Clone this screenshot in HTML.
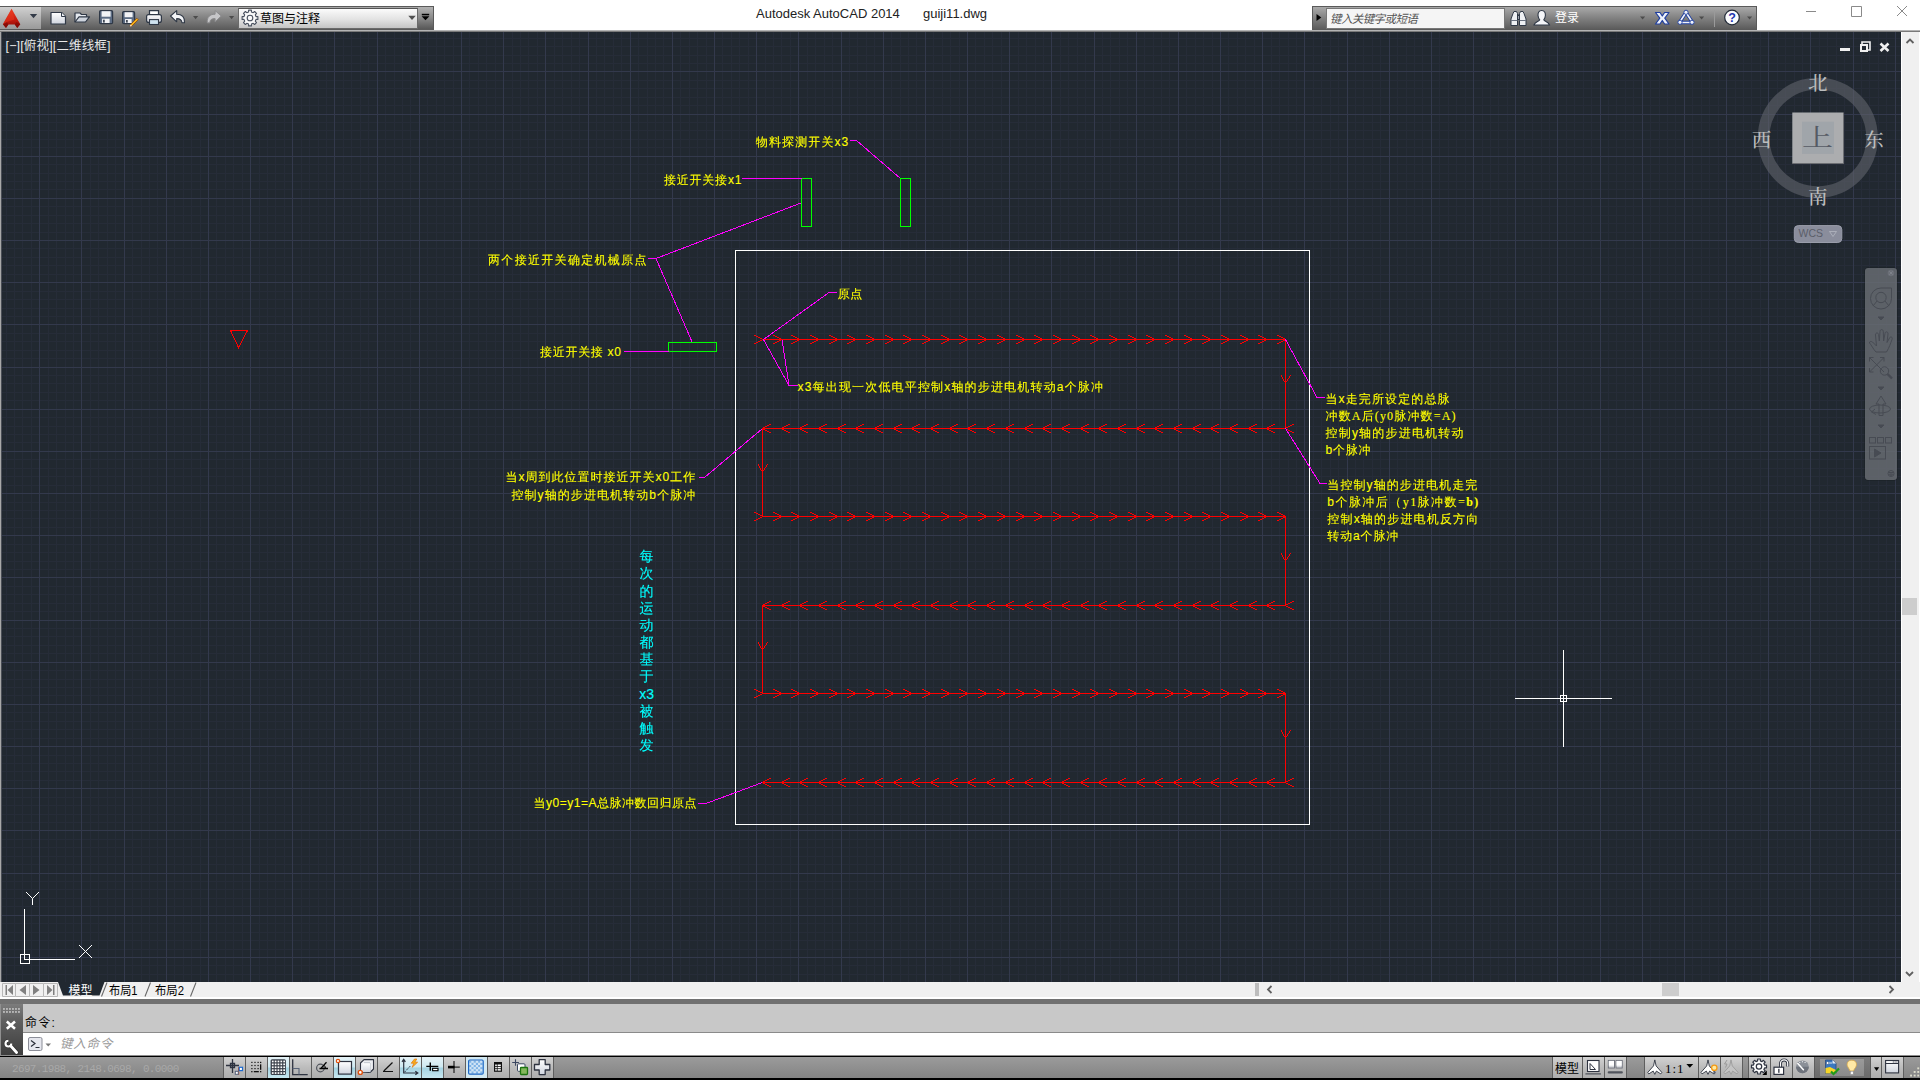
<!DOCTYPE html>
<html lang="zh-CN"><head><meta charset="utf-8"><title>Autodesk AutoCAD 2014 guiji11.dwg</title>
<style>
html,body{margin:0;padding:0}
body{width:1920px;height:1080px;overflow:hidden;background:#fff;position:relative;font-family:"Liberation Sans","Noto Sans CJK SC",sans-serif;font-size:12px}
.abs{position:absolute}
#draw{position:absolute;left:0;top:0}
</style></head><body>

<div class="abs" style="left:0;top:32px;width:2px;height:950px;background:#a8a8a8"></div>
<div class="abs" style="left:1px;top:32px;width:1px;height:950px;background:#4a4e56"></div>
<div class="abs" style="left:2px;top:32px;width:1899px;height:950px;background:#212830"></div>
<svg id="draw" width="1920" height="1080" viewBox="0 0 1920 1080">
<path d="M6.5 32V982M14.5 32V982M22.5 32V982M31.5 32V982M48.5 32V982M56.5 32V982M65.5 32V982M73.5 32V982M90.5 32V982M98.5 32V982M107.5 32V982M115.5 32V982M132.5 32V982M141.5 32V982M149.5 32V982M157.5 32V982M174.5 32V982M183.5 32V982M191.5 32V982M200.5 32V982M216.5 32V982M225.5 32V982M233.5 32V982M242.5 32V982M259.5 32V982M267.5 32V982M275.5 32V982M284.5 32V982M301.5 32V982M309.5 32V982M318.5 32V982M326.5 32V982M343.5 32V982M351.5 32V982M360.5 32V982M368.5 32V982M385.5 32V982M394.5 32V982M402.5 32V982M410.5 32V982M427.5 32V982M436.5 32V982M444.5 32V982M453.5 32V982M469.5 32V982M478.5 32V982M486.5 32V982M495.5 32V982M512.5 32V982M520.5 32V982M528.5 32V982M537.5 32V982M554.5 32V982M562.5 32V982M571.5 32V982M579.5 32V982M596.5 32V982M604.5 32V982M613.5 32V982M621.5 32V982M638.5 32V982M647.5 32V982M655.5 32V982M663.5 32V982M680.5 32V982M689.5 32V982M697.5 32V982M706.5 32V982M722.5 32V982M731.5 32V982M739.5 32V982M748.5 32V982M765.5 32V982M773.5 32V982M781.5 32V982M790.5 32V982M807.5 32V982M815.5 32V982M824.5 32V982M832.5 32V982M849.5 32V982M857.5 32V982M866.5 32V982M874.5 32V982M891.5 32V982M900.5 32V982M908.5 32V982M916.5 32V982M933.5 32V982M942.5 32V982M950.5 32V982M959.5 32V982M975.5 32V982M984.5 32V982M992.5 32V982M1001.5 32V982M1018.5 32V982M1026.5 32V982M1035.5 32V982M1043.5 32V982M1060.5 32V982M1068.5 32V982M1077.5 32V982M1085.5 32V982M1102.5 32V982M1110.5 32V982M1119.5 32V982M1127.5 32V982M1144.5 32V982M1153.5 32V982M1161.5 32V982M1169.5 32V982M1186.5 32V982M1195.5 32V982M1203.5 32V982M1212.5 32V982M1228.5 32V982M1237.5 32V982M1245.5 32V982M1254.5 32V982M1271.5 32V982M1279.5 32V982M1288.5 32V982M1296.5 32V982M1313.5 32V982M1321.5 32V982M1330.5 32V982M1338.5 32V982M1355.5 32V982M1363.5 32V982M1372.5 32V982M1380.5 32V982M1397.5 32V982M1406.5 32V982M1414.5 32V982M1422.5 32V982M1439.5 32V982M1448.5 32V982M1456.5 32V982M1465.5 32V982M1482.5 32V982M1490.5 32V982M1498.5 32V982M1507.5 32V982M1524.5 32V982M1532.5 32V982M1541.5 32V982M1549.5 32V982M1566.5 32V982M1574.5 32V982M1583.5 32V982M1591.5 32V982M1608.5 32V982M1616.5 32V982M1625.5 32V982M1633.5 32V982M1650.5 32V982M1659.5 32V982M1667.5 32V982M1675.5 32V982M1692.5 32V982M1701.5 32V982M1709.5 32V982M1718.5 32V982M1735.5 32V982M1743.5 32V982M1751.5 32V982M1760.5 32V982M1777.5 32V982M1785.5 32V982M1794.5 32V982M1802.5 32V982M1819.5 32V982M1827.5 32V982M1836.5 32V982M1844.5 32V982M1861.5 32V982M1869.5 32V982M1878.5 32V982M1886.5 32V982M2 38.5H1901M2 46.5H1901M2 55.5H1901M2 63.5H1901M2 80.5H1901M2 88.5H1901M2 97.5H1901M2 105.5H1901M2 122.5H1901M2 130.5H1901M2 139.5H1901M2 147.5H1901M2 164.5H1901M2 173.5H1901M2 181.5H1901M2 189.5H1901M2 206.5H1901M2 215.5H1901M2 223.5H1901M2 232.5H1901M2 248.5H1901M2 257.5H1901M2 265.5H1901M2 274.5H1901M2 291.5H1901M2 299.5H1901M2 308.5H1901M2 316.5H1901M2 333.5H1901M2 341.5H1901M2 350.5H1901M2 358.5H1901M2 375.5H1901M2 383.5H1901M2 392.5H1901M2 400.5H1901M2 417.5H1901M2 426.5H1901M2 434.5H1901M2 442.5H1901M2 459.5H1901M2 468.5H1901M2 476.5H1901M2 485.5H1901M2 502.5H1901M2 510.5H1901M2 518.5H1901M2 527.5H1901M2 544.5H1901M2 552.5H1901M2 561.5H1901M2 569.5H1901M2 586.5H1901M2 594.5H1901M2 603.5H1901M2 611.5H1901M2 628.5H1901M2 636.5H1901M2 645.5H1901M2 653.5H1901M2 670.5H1901M2 679.5H1901M2 687.5H1901M2 695.5H1901M2 712.5H1901M2 721.5H1901M2 729.5H1901M2 738.5H1901M2 755.5H1901M2 763.5H1901M2 771.5H1901M2 780.5H1901M2 797.5H1901M2 805.5H1901M2 814.5H1901M2 822.5H1901M2 839.5H1901M2 847.5H1901M2 856.5H1901M2 864.5H1901M2 881.5H1901M2 889.5H1901M2 898.5H1901M2 906.5H1901M2 923.5H1901M2 932.5H1901M2 940.5H1901M2 949.5H1901M2 965.5H1901M2 974.5H1901" stroke="#262c38" stroke-width="1" fill="none" shape-rendering="crispEdges"/><path d="M39.5 32V982M81.5 32V982M124.5 32V982M166.5 32V982M208.5 32V982M250.5 32V982M292.5 32V982M334.5 32V982M377.5 32V982M419.5 32V982M461.5 32V982M503.5 32V982M545.5 32V982M588.5 32V982M630.5 32V982M672.5 32V982M714.5 32V982M756.5 32V982M798.5 32V982M841.5 32V982M883.5 32V982M925.5 32V982M967.5 32V982M1009.5 32V982M1051.5 32V982M1094.5 32V982M1136.5 32V982M1178.5 32V982M1220.5 32V982M1262.5 32V982M1304.5 32V982M1347.5 32V982M1389.5 32V982M1431.5 32V982M1473.5 32V982M1515.5 32V982M1557.5 32V982M1600.5 32V982M1642.5 32V982M1684.5 32V982M1726.5 32V982M1768.5 32V982M1810.5 32V982M1853.5 32V982M1895.5 32V982M2 71.5H1901M2 114.5H1901M2 156.5H1901M2 198.5H1901M2 240.5H1901M2 282.5H1901M2 324.5H1901M2 367.5H1901M2 409.5H1901M2 451.5H1901M2 493.5H1901M2 535.5H1901M2 577.5H1901M2 620.5H1901M2 662.5H1901M2 704.5H1901M2 746.5H1901M2 788.5H1901M2 830.5H1901M2 873.5H1901M2 915.5H1901M2 957.5H1901" stroke="#33394c" stroke-width="1" fill="none" shape-rendering="crispEdges"/>
<!--DRAWING-->
<path d="M762.0 339.5H1286.0M762.0 428.5H1286.0M762.0 516.5H1286.0M762.0 605.5H1286.0M762.0 693.5H1286.0M762.0 782.5H1286.0M1285.5 339.0V429.0M762.5 428.0V517.0M1285.5 516.0V606.0M762.5 605.0V694.0M1285.5 693.0V783.0" stroke="#ff0000" stroke-width="1" fill="none" shape-rendering="crispEdges"/><path d="M754 335.5h2m0 1h2m0 1h2m0 1h2M754 343.5h2m0-1h2m0-1h2m0-1h2M773 335.5h2m0 1h2m0 1h2m0 1h2M773 343.5h2m0-1h2m0-1h2m0-1h2M791 335.5h2m0 1h2m0 1h2m0 1h2M791 343.5h2m0-1h2m0-1h2m0-1h2M810 335.5h2m0 1h2m0 1h2m0 1h2M810 343.5h2m0-1h2m0-1h2m0-1h2M829 335.5h2m0 1h2m0 1h2m0 1h2M829 343.5h2m0-1h2m0-1h2m0-1h2M847 335.5h2m0 1h2m0 1h2m0 1h2M847 343.5h2m0-1h2m0-1h2m0-1h2M866 335.5h2m0 1h2m0 1h2m0 1h2M866 343.5h2m0-1h2m0-1h2m0-1h2M885 335.5h2m0 1h2m0 1h2m0 1h2M885 343.5h2m0-1h2m0-1h2m0-1h2M903 335.5h2m0 1h2m0 1h2m0 1h2M903 343.5h2m0-1h2m0-1h2m0-1h2M922 335.5h2m0 1h2m0 1h2m0 1h2M922 343.5h2m0-1h2m0-1h2m0-1h2M941 335.5h2m0 1h2m0 1h2m0 1h2M941 343.5h2m0-1h2m0-1h2m0-1h2M959 335.5h2m0 1h2m0 1h2m0 1h2M959 343.5h2m0-1h2m0-1h2m0-1h2M978 335.5h2m0 1h2m0 1h2m0 1h2M978 343.5h2m0-1h2m0-1h2m0-1h2M997 335.5h2m0 1h2m0 1h2m0 1h2M997 343.5h2m0-1h2m0-1h2m0-1h2M1016 335.5h2m0 1h2m0 1h2m0 1h2M1016 343.5h2m0-1h2m0-1h2m0-1h2M1034 335.5h2m0 1h2m0 1h2m0 1h2M1034 343.5h2m0-1h2m0-1h2m0-1h2M1053 335.5h2m0 1h2m0 1h2m0 1h2M1053 343.5h2m0-1h2m0-1h2m0-1h2M1072 335.5h2m0 1h2m0 1h2m0 1h2M1072 343.5h2m0-1h2m0-1h2m0-1h2M1090 335.5h2m0 1h2m0 1h2m0 1h2M1090 343.5h2m0-1h2m0-1h2m0-1h2M1109 335.5h2m0 1h2m0 1h2m0 1h2M1109 343.5h2m0-1h2m0-1h2m0-1h2M1128 335.5h2m0 1h2m0 1h2m0 1h2M1128 343.5h2m0-1h2m0-1h2m0-1h2M1146 335.5h2m0 1h2m0 1h2m0 1h2M1146 343.5h2m0-1h2m0-1h2m0-1h2M1165 335.5h2m0 1h2m0 1h2m0 1h2M1165 343.5h2m0-1h2m0-1h2m0-1h2M1184 335.5h2m0 1h2m0 1h2m0 1h2M1184 343.5h2m0-1h2m0-1h2m0-1h2M1202 335.5h2m0 1h2m0 1h2m0 1h2M1202 343.5h2m0-1h2m0-1h2m0-1h2M1221 335.5h2m0 1h2m0 1h2m0 1h2M1221 343.5h2m0-1h2m0-1h2m0-1h2M1240 335.5h2m0 1h2m0 1h2m0 1h2M1240 343.5h2m0-1h2m0-1h2m0-1h2M1258 335.5h2m0 1h2m0 1h2m0 1h2M1258 343.5h2m0-1h2m0-1h2m0-1h2M1277 335.5h2m0 1h2m0 1h2m0 1h2M1277 343.5h2m0-1h2m0-1h2m0-1h2M771 424.5h-2m0 1h-2m0 1h-2m0 1h-2M771 432.5h-2m0-1h-2m0-1h-2m0-1h-2M790 424.5h-2m0 1h-2m0 1h-2m0 1h-2M790 432.5h-2m0-1h-2m0-1h-2m0-1h-2M808 424.5h-2m0 1h-2m0 1h-2m0 1h-2M808 432.5h-2m0-1h-2m0-1h-2m0-1h-2M827 424.5h-2m0 1h-2m0 1h-2m0 1h-2M827 432.5h-2m0-1h-2m0-1h-2m0-1h-2M846 424.5h-2m0 1h-2m0 1h-2m0 1h-2M846 432.5h-2m0-1h-2m0-1h-2m0-1h-2M864 424.5h-2m0 1h-2m0 1h-2m0 1h-2M864 432.5h-2m0-1h-2m0-1h-2m0-1h-2M883 424.5h-2m0 1h-2m0 1h-2m0 1h-2M883 432.5h-2m0-1h-2m0-1h-2m0-1h-2M902 424.5h-2m0 1h-2m0 1h-2m0 1h-2M902 432.5h-2m0-1h-2m0-1h-2m0-1h-2M920 424.5h-2m0 1h-2m0 1h-2m0 1h-2M920 432.5h-2m0-1h-2m0-1h-2m0-1h-2M939 424.5h-2m0 1h-2m0 1h-2m0 1h-2M939 432.5h-2m0-1h-2m0-1h-2m0-1h-2M958 424.5h-2m0 1h-2m0 1h-2m0 1h-2M958 432.5h-2m0-1h-2m0-1h-2m0-1h-2M976 424.5h-2m0 1h-2m0 1h-2m0 1h-2M976 432.5h-2m0-1h-2m0-1h-2m0-1h-2M995 424.5h-2m0 1h-2m0 1h-2m0 1h-2M995 432.5h-2m0-1h-2m0-1h-2m0-1h-2M1014 424.5h-2m0 1h-2m0 1h-2m0 1h-2M1014 432.5h-2m0-1h-2m0-1h-2m0-1h-2M1033 424.5h-2m0 1h-2m0 1h-2m0 1h-2M1033 432.5h-2m0-1h-2m0-1h-2m0-1h-2M1051 424.5h-2m0 1h-2m0 1h-2m0 1h-2M1051 432.5h-2m0-1h-2m0-1h-2m0-1h-2M1070 424.5h-2m0 1h-2m0 1h-2m0 1h-2M1070 432.5h-2m0-1h-2m0-1h-2m0-1h-2M1089 424.5h-2m0 1h-2m0 1h-2m0 1h-2M1089 432.5h-2m0-1h-2m0-1h-2m0-1h-2M1107 424.5h-2m0 1h-2m0 1h-2m0 1h-2M1107 432.5h-2m0-1h-2m0-1h-2m0-1h-2M1126 424.5h-2m0 1h-2m0 1h-2m0 1h-2M1126 432.5h-2m0-1h-2m0-1h-2m0-1h-2M1145 424.5h-2m0 1h-2m0 1h-2m0 1h-2M1145 432.5h-2m0-1h-2m0-1h-2m0-1h-2M1163 424.5h-2m0 1h-2m0 1h-2m0 1h-2M1163 432.5h-2m0-1h-2m0-1h-2m0-1h-2M1182 424.5h-2m0 1h-2m0 1h-2m0 1h-2M1182 432.5h-2m0-1h-2m0-1h-2m0-1h-2M1201 424.5h-2m0 1h-2m0 1h-2m0 1h-2M1201 432.5h-2m0-1h-2m0-1h-2m0-1h-2M1219 424.5h-2m0 1h-2m0 1h-2m0 1h-2M1219 432.5h-2m0-1h-2m0-1h-2m0-1h-2M1238 424.5h-2m0 1h-2m0 1h-2m0 1h-2M1238 432.5h-2m0-1h-2m0-1h-2m0-1h-2M1257 424.5h-2m0 1h-2m0 1h-2m0 1h-2M1257 432.5h-2m0-1h-2m0-1h-2m0-1h-2M1275 424.5h-2m0 1h-2m0 1h-2m0 1h-2M1275 432.5h-2m0-1h-2m0-1h-2m0-1h-2M1294 424.5h-2m0 1h-2m0 1h-2m0 1h-2M1294 432.5h-2m0-1h-2m0-1h-2m0-1h-2M754 512.5h2m0 1h2m0 1h2m0 1h2M754 520.5h2m0-1h2m0-1h2m0-1h2M773 512.5h2m0 1h2m0 1h2m0 1h2M773 520.5h2m0-1h2m0-1h2m0-1h2M791 512.5h2m0 1h2m0 1h2m0 1h2M791 520.5h2m0-1h2m0-1h2m0-1h2M810 512.5h2m0 1h2m0 1h2m0 1h2M810 520.5h2m0-1h2m0-1h2m0-1h2M829 512.5h2m0 1h2m0 1h2m0 1h2M829 520.5h2m0-1h2m0-1h2m0-1h2M847 512.5h2m0 1h2m0 1h2m0 1h2M847 520.5h2m0-1h2m0-1h2m0-1h2M866 512.5h2m0 1h2m0 1h2m0 1h2M866 520.5h2m0-1h2m0-1h2m0-1h2M885 512.5h2m0 1h2m0 1h2m0 1h2M885 520.5h2m0-1h2m0-1h2m0-1h2M903 512.5h2m0 1h2m0 1h2m0 1h2M903 520.5h2m0-1h2m0-1h2m0-1h2M922 512.5h2m0 1h2m0 1h2m0 1h2M922 520.5h2m0-1h2m0-1h2m0-1h2M941 512.5h2m0 1h2m0 1h2m0 1h2M941 520.5h2m0-1h2m0-1h2m0-1h2M959 512.5h2m0 1h2m0 1h2m0 1h2M959 520.5h2m0-1h2m0-1h2m0-1h2M978 512.5h2m0 1h2m0 1h2m0 1h2M978 520.5h2m0-1h2m0-1h2m0-1h2M997 512.5h2m0 1h2m0 1h2m0 1h2M997 520.5h2m0-1h2m0-1h2m0-1h2M1016 512.5h2m0 1h2m0 1h2m0 1h2M1016 520.5h2m0-1h2m0-1h2m0-1h2M1034 512.5h2m0 1h2m0 1h2m0 1h2M1034 520.5h2m0-1h2m0-1h2m0-1h2M1053 512.5h2m0 1h2m0 1h2m0 1h2M1053 520.5h2m0-1h2m0-1h2m0-1h2M1072 512.5h2m0 1h2m0 1h2m0 1h2M1072 520.5h2m0-1h2m0-1h2m0-1h2M1090 512.5h2m0 1h2m0 1h2m0 1h2M1090 520.5h2m0-1h2m0-1h2m0-1h2M1109 512.5h2m0 1h2m0 1h2m0 1h2M1109 520.5h2m0-1h2m0-1h2m0-1h2M1128 512.5h2m0 1h2m0 1h2m0 1h2M1128 520.5h2m0-1h2m0-1h2m0-1h2M1146 512.5h2m0 1h2m0 1h2m0 1h2M1146 520.5h2m0-1h2m0-1h2m0-1h2M1165 512.5h2m0 1h2m0 1h2m0 1h2M1165 520.5h2m0-1h2m0-1h2m0-1h2M1184 512.5h2m0 1h2m0 1h2m0 1h2M1184 520.5h2m0-1h2m0-1h2m0-1h2M1202 512.5h2m0 1h2m0 1h2m0 1h2M1202 520.5h2m0-1h2m0-1h2m0-1h2M1221 512.5h2m0 1h2m0 1h2m0 1h2M1221 520.5h2m0-1h2m0-1h2m0-1h2M1240 512.5h2m0 1h2m0 1h2m0 1h2M1240 520.5h2m0-1h2m0-1h2m0-1h2M1258 512.5h2m0 1h2m0 1h2m0 1h2M1258 520.5h2m0-1h2m0-1h2m0-1h2M1277 512.5h2m0 1h2m0 1h2m0 1h2M1277 520.5h2m0-1h2m0-1h2m0-1h2M771 601.5h-2m0 1h-2m0 1h-2m0 1h-2M771 609.5h-2m0-1h-2m0-1h-2m0-1h-2M790 601.5h-2m0 1h-2m0 1h-2m0 1h-2M790 609.5h-2m0-1h-2m0-1h-2m0-1h-2M808 601.5h-2m0 1h-2m0 1h-2m0 1h-2M808 609.5h-2m0-1h-2m0-1h-2m0-1h-2M827 601.5h-2m0 1h-2m0 1h-2m0 1h-2M827 609.5h-2m0-1h-2m0-1h-2m0-1h-2M846 601.5h-2m0 1h-2m0 1h-2m0 1h-2M846 609.5h-2m0-1h-2m0-1h-2m0-1h-2M864 601.5h-2m0 1h-2m0 1h-2m0 1h-2M864 609.5h-2m0-1h-2m0-1h-2m0-1h-2M883 601.5h-2m0 1h-2m0 1h-2m0 1h-2M883 609.5h-2m0-1h-2m0-1h-2m0-1h-2M902 601.5h-2m0 1h-2m0 1h-2m0 1h-2M902 609.5h-2m0-1h-2m0-1h-2m0-1h-2M920 601.5h-2m0 1h-2m0 1h-2m0 1h-2M920 609.5h-2m0-1h-2m0-1h-2m0-1h-2M939 601.5h-2m0 1h-2m0 1h-2m0 1h-2M939 609.5h-2m0-1h-2m0-1h-2m0-1h-2M958 601.5h-2m0 1h-2m0 1h-2m0 1h-2M958 609.5h-2m0-1h-2m0-1h-2m0-1h-2M976 601.5h-2m0 1h-2m0 1h-2m0 1h-2M976 609.5h-2m0-1h-2m0-1h-2m0-1h-2M995 601.5h-2m0 1h-2m0 1h-2m0 1h-2M995 609.5h-2m0-1h-2m0-1h-2m0-1h-2M1014 601.5h-2m0 1h-2m0 1h-2m0 1h-2M1014 609.5h-2m0-1h-2m0-1h-2m0-1h-2M1033 601.5h-2m0 1h-2m0 1h-2m0 1h-2M1033 609.5h-2m0-1h-2m0-1h-2m0-1h-2M1051 601.5h-2m0 1h-2m0 1h-2m0 1h-2M1051 609.5h-2m0-1h-2m0-1h-2m0-1h-2M1070 601.5h-2m0 1h-2m0 1h-2m0 1h-2M1070 609.5h-2m0-1h-2m0-1h-2m0-1h-2M1089 601.5h-2m0 1h-2m0 1h-2m0 1h-2M1089 609.5h-2m0-1h-2m0-1h-2m0-1h-2M1107 601.5h-2m0 1h-2m0 1h-2m0 1h-2M1107 609.5h-2m0-1h-2m0-1h-2m0-1h-2M1126 601.5h-2m0 1h-2m0 1h-2m0 1h-2M1126 609.5h-2m0-1h-2m0-1h-2m0-1h-2M1145 601.5h-2m0 1h-2m0 1h-2m0 1h-2M1145 609.5h-2m0-1h-2m0-1h-2m0-1h-2M1163 601.5h-2m0 1h-2m0 1h-2m0 1h-2M1163 609.5h-2m0-1h-2m0-1h-2m0-1h-2M1182 601.5h-2m0 1h-2m0 1h-2m0 1h-2M1182 609.5h-2m0-1h-2m0-1h-2m0-1h-2M1201 601.5h-2m0 1h-2m0 1h-2m0 1h-2M1201 609.5h-2m0-1h-2m0-1h-2m0-1h-2M1219 601.5h-2m0 1h-2m0 1h-2m0 1h-2M1219 609.5h-2m0-1h-2m0-1h-2m0-1h-2M1238 601.5h-2m0 1h-2m0 1h-2m0 1h-2M1238 609.5h-2m0-1h-2m0-1h-2m0-1h-2M1257 601.5h-2m0 1h-2m0 1h-2m0 1h-2M1257 609.5h-2m0-1h-2m0-1h-2m0-1h-2M1275 601.5h-2m0 1h-2m0 1h-2m0 1h-2M1275 609.5h-2m0-1h-2m0-1h-2m0-1h-2M1294 601.5h-2m0 1h-2m0 1h-2m0 1h-2M1294 609.5h-2m0-1h-2m0-1h-2m0-1h-2M754 689.5h2m0 1h2m0 1h2m0 1h2M754 697.5h2m0-1h2m0-1h2m0-1h2M773 689.5h2m0 1h2m0 1h2m0 1h2M773 697.5h2m0-1h2m0-1h2m0-1h2M791 689.5h2m0 1h2m0 1h2m0 1h2M791 697.5h2m0-1h2m0-1h2m0-1h2M810 689.5h2m0 1h2m0 1h2m0 1h2M810 697.5h2m0-1h2m0-1h2m0-1h2M829 689.5h2m0 1h2m0 1h2m0 1h2M829 697.5h2m0-1h2m0-1h2m0-1h2M847 689.5h2m0 1h2m0 1h2m0 1h2M847 697.5h2m0-1h2m0-1h2m0-1h2M866 689.5h2m0 1h2m0 1h2m0 1h2M866 697.5h2m0-1h2m0-1h2m0-1h2M885 689.5h2m0 1h2m0 1h2m0 1h2M885 697.5h2m0-1h2m0-1h2m0-1h2M903 689.5h2m0 1h2m0 1h2m0 1h2M903 697.5h2m0-1h2m0-1h2m0-1h2M922 689.5h2m0 1h2m0 1h2m0 1h2M922 697.5h2m0-1h2m0-1h2m0-1h2M941 689.5h2m0 1h2m0 1h2m0 1h2M941 697.5h2m0-1h2m0-1h2m0-1h2M959 689.5h2m0 1h2m0 1h2m0 1h2M959 697.5h2m0-1h2m0-1h2m0-1h2M978 689.5h2m0 1h2m0 1h2m0 1h2M978 697.5h2m0-1h2m0-1h2m0-1h2M997 689.5h2m0 1h2m0 1h2m0 1h2M997 697.5h2m0-1h2m0-1h2m0-1h2M1016 689.5h2m0 1h2m0 1h2m0 1h2M1016 697.5h2m0-1h2m0-1h2m0-1h2M1034 689.5h2m0 1h2m0 1h2m0 1h2M1034 697.5h2m0-1h2m0-1h2m0-1h2M1053 689.5h2m0 1h2m0 1h2m0 1h2M1053 697.5h2m0-1h2m0-1h2m0-1h2M1072 689.5h2m0 1h2m0 1h2m0 1h2M1072 697.5h2m0-1h2m0-1h2m0-1h2M1090 689.5h2m0 1h2m0 1h2m0 1h2M1090 697.5h2m0-1h2m0-1h2m0-1h2M1109 689.5h2m0 1h2m0 1h2m0 1h2M1109 697.5h2m0-1h2m0-1h2m0-1h2M1128 689.5h2m0 1h2m0 1h2m0 1h2M1128 697.5h2m0-1h2m0-1h2m0-1h2M1146 689.5h2m0 1h2m0 1h2m0 1h2M1146 697.5h2m0-1h2m0-1h2m0-1h2M1165 689.5h2m0 1h2m0 1h2m0 1h2M1165 697.5h2m0-1h2m0-1h2m0-1h2M1184 689.5h2m0 1h2m0 1h2m0 1h2M1184 697.5h2m0-1h2m0-1h2m0-1h2M1202 689.5h2m0 1h2m0 1h2m0 1h2M1202 697.5h2m0-1h2m0-1h2m0-1h2M1221 689.5h2m0 1h2m0 1h2m0 1h2M1221 697.5h2m0-1h2m0-1h2m0-1h2M1240 689.5h2m0 1h2m0 1h2m0 1h2M1240 697.5h2m0-1h2m0-1h2m0-1h2M1258 689.5h2m0 1h2m0 1h2m0 1h2M1258 697.5h2m0-1h2m0-1h2m0-1h2M1277 689.5h2m0 1h2m0 1h2m0 1h2M1277 697.5h2m0-1h2m0-1h2m0-1h2M771 778.5h-2m0 1h-2m0 1h-2m0 1h-2M771 786.5h-2m0-1h-2m0-1h-2m0-1h-2M790 778.5h-2m0 1h-2m0 1h-2m0 1h-2M790 786.5h-2m0-1h-2m0-1h-2m0-1h-2M808 778.5h-2m0 1h-2m0 1h-2m0 1h-2M808 786.5h-2m0-1h-2m0-1h-2m0-1h-2M827 778.5h-2m0 1h-2m0 1h-2m0 1h-2M827 786.5h-2m0-1h-2m0-1h-2m0-1h-2M846 778.5h-2m0 1h-2m0 1h-2m0 1h-2M846 786.5h-2m0-1h-2m0-1h-2m0-1h-2M864 778.5h-2m0 1h-2m0 1h-2m0 1h-2M864 786.5h-2m0-1h-2m0-1h-2m0-1h-2M883 778.5h-2m0 1h-2m0 1h-2m0 1h-2M883 786.5h-2m0-1h-2m0-1h-2m0-1h-2M902 778.5h-2m0 1h-2m0 1h-2m0 1h-2M902 786.5h-2m0-1h-2m0-1h-2m0-1h-2M920 778.5h-2m0 1h-2m0 1h-2m0 1h-2M920 786.5h-2m0-1h-2m0-1h-2m0-1h-2M939 778.5h-2m0 1h-2m0 1h-2m0 1h-2M939 786.5h-2m0-1h-2m0-1h-2m0-1h-2M958 778.5h-2m0 1h-2m0 1h-2m0 1h-2M958 786.5h-2m0-1h-2m0-1h-2m0-1h-2M976 778.5h-2m0 1h-2m0 1h-2m0 1h-2M976 786.5h-2m0-1h-2m0-1h-2m0-1h-2M995 778.5h-2m0 1h-2m0 1h-2m0 1h-2M995 786.5h-2m0-1h-2m0-1h-2m0-1h-2M1014 778.5h-2m0 1h-2m0 1h-2m0 1h-2M1014 786.5h-2m0-1h-2m0-1h-2m0-1h-2M1033 778.5h-2m0 1h-2m0 1h-2m0 1h-2M1033 786.5h-2m0-1h-2m0-1h-2m0-1h-2M1051 778.5h-2m0 1h-2m0 1h-2m0 1h-2M1051 786.5h-2m0-1h-2m0-1h-2m0-1h-2M1070 778.5h-2m0 1h-2m0 1h-2m0 1h-2M1070 786.5h-2m0-1h-2m0-1h-2m0-1h-2M1089 778.5h-2m0 1h-2m0 1h-2m0 1h-2M1089 786.5h-2m0-1h-2m0-1h-2m0-1h-2M1107 778.5h-2m0 1h-2m0 1h-2m0 1h-2M1107 786.5h-2m0-1h-2m0-1h-2m0-1h-2M1126 778.5h-2m0 1h-2m0 1h-2m0 1h-2M1126 786.5h-2m0-1h-2m0-1h-2m0-1h-2M1145 778.5h-2m0 1h-2m0 1h-2m0 1h-2M1145 786.5h-2m0-1h-2m0-1h-2m0-1h-2M1163 778.5h-2m0 1h-2m0 1h-2m0 1h-2M1163 786.5h-2m0-1h-2m0-1h-2m0-1h-2M1182 778.5h-2m0 1h-2m0 1h-2m0 1h-2M1182 786.5h-2m0-1h-2m0-1h-2m0-1h-2M1201 778.5h-2m0 1h-2m0 1h-2m0 1h-2M1201 786.5h-2m0-1h-2m0-1h-2m0-1h-2M1219 778.5h-2m0 1h-2m0 1h-2m0 1h-2M1219 786.5h-2m0-1h-2m0-1h-2m0-1h-2M1238 778.5h-2m0 1h-2m0 1h-2m0 1h-2M1238 786.5h-2m0-1h-2m0-1h-2m0-1h-2M1257 778.5h-2m0 1h-2m0 1h-2m0 1h-2M1257 786.5h-2m0-1h-2m0-1h-2m0-1h-2M1275 778.5h-2m0 1h-2m0 1h-2m0 1h-2M1275 786.5h-2m0-1h-2m0-1h-2m0-1h-2M1294 778.5h-2m0 1h-2m0 1h-2m0 1h-2M1294 786.5h-2m0-1h-2m0-1h-2m0-1h-2M1281.5 375v2m1 0v2m1 0v2M1284 381.5h3M1290.5 375v1m-1 0v2m-1 0v1m-1 0v2M758.5 464v2m1 0v2m1 0v2M761 470.5h3M767.5 464v1m-1 0v2m-1 0v1m-1 0v2M1281.5 553v2m1 0v2m1 0v2M1284 559.5h3M1290.5 553v1m-1 0v2m-1 0v1m-1 0v2M758.5 642v2m1 0v2m1 0v2M761 648.5h3M767.5 642v1m-1 0v2m-1 0v1m-1 0v2M1281.5 730v2m1 0v2m1 0v2M1284 736.5h3M1290.5 730v1m-1 0v2m-1 0v1m-1 0v2" stroke="#ff0000" stroke-width="1" fill="none" shape-rendering="crispEdges"/><path d="M230.5 330.5H247.5L238.5 347.5Z" stroke="#ff0000" stroke-width="1" fill="none" shape-rendering="crispEdges"/><rect x="735.5" y="250.5" width="574" height="574" stroke="#ffffff" fill="none" shape-rendering="crispEdges"/><rect x="801.5" y="178.5" width="10" height="48" stroke="#00ff00" fill="none" shape-rendering="crispEdges"/><rect x="900.5" y="178.5" width="10" height="48" stroke="#00ff00" fill="none" shape-rendering="crispEdges"/><rect x="668.5" y="342.5" width="48" height="9" stroke="#00ff00" fill="none" shape-rendering="crispEdges"/><path d="M849.5 140.5H856.5L900.5 178.5M742 178.5H801.5M648 258.5H656L801.5 202.8M656 258.5L692.3 342.5M624 351.5H668.5M837 292.5H829L763.5 339.5M797.5 385.5H789L763.5 339.5M789 385.5L782 339.5M1285.5 339.5L1317 397.5H1325M1285.5 428.5L1320 483.5H1327M762.5 428.5L704.5 477.5H698.5M762.5 782.5L706 803.5H698" stroke="#ff00ff" stroke-width="1" fill="none" shape-rendering="crispEdges"/><path d="M1515 698.5H1612M1563.5 650V747M1560.5 695.5H1566.5V701.5H1560.5Z" stroke="#ffffff" stroke-width="1" fill="none" shape-rendering="crispEdges"/><path d="M24.5 909V959.5H75M20.5 954.5H29.5V963.5H20.5Z" stroke="#ffffff" stroke-width="1" fill="none" shape-rendering="crispEdges"/><path d="M26 892L32.5 898.5L39 892M32.5 898.5V905M79 945L92 958M92 945L79 958" stroke="#ffffff" stroke-width="1" fill="none"/><g font-family='"Liberation Sans","WenQuanYi Zen Hei","Noto Sans CJK SC",sans-serif' ><text x="755.8" y="145.5" fill="#ffff00" stroke="#ffff00" stroke-width="0.12" font-size="12" text-anchor="start" textLength="92.5" lengthAdjust="spacing">物料探测开关x3</text><text x="663.9" y="183.8" fill="#ffff00" stroke="#ffff00" stroke-width="0.12" font-size="12" text-anchor="start" textLength="77.5" lengthAdjust="spacing">接近开关接x1</text><text x="488" y="263.8" fill="#ffff00" stroke="#ffff00" stroke-width="0.12" font-size="12" text-anchor="start" textLength="158.5" lengthAdjust="spacing">两个接近开关确定机械原点</text><text x="540" y="356.2" fill="#ffff00" stroke="#ffff00" stroke-width="0.12" font-size="12" text-anchor="start" textLength="81" lengthAdjust="spacing">接近开关接 x0</text><text x="837.7" y="297.8" fill="#ffff00" stroke="#ffff00" stroke-width="0.12" font-size="12" text-anchor="start" textLength="24.5" lengthAdjust="spacing">原点</text><text x="797.5" y="390.6" fill="#ffff00" stroke="#ffff00" stroke-width="0.12" font-size="12" text-anchor="start" textLength="305.5" lengthAdjust="spacing">x3每出现一次低电平控制x轴的步进电机转动a个脉冲</text><text x="1325.5" y="402.6" fill="#ffff00" stroke="#ffff00" stroke-width="0.12" font-size="12" text-anchor="start" textLength="124" lengthAdjust="spacing">当x走完所设定的总脉</text><text x="1325.5" y="419.6" fill="#ffff00" stroke="#ffff00" stroke-width="0.12" font-size="12" text-anchor="start" textLength="130" lengthAdjust="spacing">冲数<tspan font-family="Liberation Serif,serif">A</tspan>后<tspan font-family="Liberation Serif,serif">(y0</tspan>脉冲数<tspan font-family="Liberation Serif,serif">=A)</tspan></text><text x="1325.5" y="436.6" fill="#ffff00" stroke="#ffff00" stroke-width="0.12" font-size="12" text-anchor="start" textLength="138" lengthAdjust="spacing">控制y轴的步进电机转动</text><text x="1325.5" y="453.6" fill="#ffff00" stroke="#ffff00" stroke-width="0.12" font-size="12" text-anchor="start" textLength="45" lengthAdjust="spacing">b个脉冲</text><text x="1327.3" y="488.8" fill="#ffff00" stroke="#ffff00" stroke-width="0.12" font-size="12" text-anchor="start" textLength="150" lengthAdjust="spacing">当控制y轴的步进电机走完</text><text x="1327.3" y="505.8" fill="#ffff00" stroke="#ffff00" stroke-width="0.12" font-size="12" text-anchor="start" textLength="151" lengthAdjust="spacing">b个脉冲后（<tspan font-family="Liberation Serif,serif">y1</tspan>脉冲数<tspan font-family="Liberation Serif,serif">=<tspan font-weight="bold">b)</tspan></tspan></text><text x="1327.3" y="522.8" fill="#ffff00" stroke="#ffff00" stroke-width="0.12" font-size="12" text-anchor="start" textLength="151" lengthAdjust="spacing">控制x轴的步进电机反方向</text><text x="1327.3" y="539.8" fill="#ffff00" stroke="#ffff00" stroke-width="0.12" font-size="12" text-anchor="start" textLength="71" lengthAdjust="spacing">转动a个脉冲</text><text x="505.6" y="481.4" fill="#ffff00" stroke="#ffff00" stroke-width="0.12" font-size="12" text-anchor="start" textLength="189.7" lengthAdjust="spacing">当x周到此位置时接近开关x0工作</text><text x="511.4" y="499.4" fill="#ffff00" stroke="#ffff00" stroke-width="0.12" font-size="12" text-anchor="start" textLength="183.9" lengthAdjust="spacing">控制y轴的步进电机转动b个脉冲</text><text x="533.6" y="807.4" fill="#ffff00" stroke="#ffff00" stroke-width="0.12" font-size="12" text-anchor="start" textLength="163" lengthAdjust="spacing">当y0=y1=A总脉冲数回归原点</text><text x="646.6" y="561.3" fill="#00ffff" stroke="#00ffff" stroke-width="0.12" font-size="14" text-anchor="middle">每</text><text x="646.6" y="578.4" fill="#00ffff" stroke="#00ffff" stroke-width="0.12" font-size="14" text-anchor="middle">次</text><text x="646.6" y="595.6" fill="#00ffff" stroke="#00ffff" stroke-width="0.12" font-size="14" text-anchor="middle">的</text><text x="646.6" y="612.8" fill="#00ffff" stroke="#00ffff" stroke-width="0.12" font-size="14" text-anchor="middle">运</text><text x="646.6" y="629.9" fill="#00ffff" stroke="#00ffff" stroke-width="0.12" font-size="14" text-anchor="middle">动</text><text x="646.6" y="647.0" fill="#00ffff" stroke="#00ffff" stroke-width="0.12" font-size="14" text-anchor="middle">都</text><text x="646.6" y="664.2" fill="#00ffff" stroke="#00ffff" stroke-width="0.12" font-size="14" text-anchor="middle">基</text><text x="646.6" y="681.3" fill="#00ffff" stroke="#00ffff" stroke-width="0.12" font-size="14" text-anchor="middle">于</text><text x="646.6" y="698.5" fill="#00ffff" stroke="#00ffff" stroke-width="0.12" font-size="14" text-anchor="middle">x3</text><text x="646.6" y="715.6" fill="#00ffff" stroke="#00ffff" stroke-width="0.12" font-size="14" text-anchor="middle">被</text><text x="646.6" y="732.8" fill="#00ffff" stroke="#00ffff" stroke-width="0.12" font-size="14" text-anchor="middle">触</text><text x="646.6" y="749.9" fill="#00ffff" stroke="#00ffff" stroke-width="0.12" font-size="14" text-anchor="middle">发</text></g>
<text x="5.5" y="49.5" fill="#e8e8e8" font-size="12.5" font-family='"Liberation Sans","Noto Sans CJK SC",sans-serif' textLength="105" lengthAdjust="spacing">[−][俯视][二维线框]</text><rect x="1840" y="48" width="10" height="3" fill="#f0f0f0"/><path d="M1862 44V42H1870V50H1868" stroke="#f0f0f0" stroke-width="1.6" fill="none"/><rect x="1861" y="45" width="6" height="6" stroke="#f0f0f0" stroke-width="2" fill="none"/><path d="M1880.5 43.5L1888.5 51M1888.5 43.5L1880.5 51" stroke="#f0f0f0" stroke-width="2.6" fill="none"/><circle cx="1817.8" cy="137.8" r="54.2" stroke="#5f636b" stroke-opacity="0.62" stroke-width="11.6" fill="none"/><rect x="1792.3" y="112.5" width="51.3" height="51.1" fill="#acadaf"/><path d="M1843.5 113V163.500H1792.500" stroke="#6c6e72" stroke-width="1" fill="none"/><rect x="1802" y="121.7" width="32" height="32.2" fill="#a0a5aa"/><g font-family='Liberation Serif,Noto Serif CJK SC,serif' fill="#bcbdbe" font-size="19.500" font-weight="500" text-anchor="middle"><text x="1817.8" y="90.300">北</text><text x="1817.8" y="203.500">南</text><text x="1761.5" y="146.500">西</text><text x="1874" y="146.500">东</text></g><text transform="translate(1817.400,146) scale(1,0.780)" x="0" y="0" font-family="Liberation Serif,Noto Serif CJK SC,serif" fill="#555a64" font-size="31" text-anchor="middle">上</text><rect x="1794.3" y="225.6" width="47.5" height="16.9" rx="4" fill="#8a8d9c" stroke="#9a9dab" stroke-width="1"/><text x="1798.5" y="236.800" font-family="Liberation Sans,sans-serif" fill="#5a5d69" font-size="10.5">WCS</text><path d="M1829.5 231.5H1836.5L1833 236.5Z" stroke="#b4b6c0" stroke-width="0.8" fill="none"/><rect x="1864.500" y="267.500" width="33" height="213" rx="3.500" fill="#12161c" fill-opacity="0.55"/><rect x="1865" y="268" width="32" height="212" rx="3" fill="#868a92" fill-opacity="0.62"/><g stroke="#474b53" fill="none" stroke-width="1"><circle cx="1891" cy="273" r="3.300" fill="#6b6f77" stroke="none"/><path d="M1889.400 271.400L1892.600 274.600M1892.600 271.400L1889.400 274.600" stroke="#7e828a"/><path d="M1870.5 298.5a10.5 10.5 0 0 1 10.5 -10.5H1891.5V298.5a10.5 10.5 0 0 1 -21 0Z"/><circle cx="1881" cy="297.5" r="5.2"/><path d="M1877 301L1873 306M1885 301L1889 306"/><path d="M1878 317H1884L1881 320Z" fill="#474b53"/><path d="M1876 352C1873 349 1871.500 345 1869.500 343C1869 341.500 1871 341 1872.500 342L1876.500 346L1875.500 335C1875.300 332.500 1878.300 332.300 1878.600 334.500L1879.300 341L1880 331.500C1880 329 1883.300 329 1883.300 331.500L1883.600 341L1885 333.500C1885.300 331 1888.300 331.500 1888 334L1887 342.500L1889.500 338C1890.500 336 1893 337 1892 339.500C1890.500 343.500 1889.500 347 1886.500 352Z"/><path d="M1869.500 357.500L1884 372M1884 357.500L1869.500 372M1869.500 361.500V357.500H1873.500M1880 357.500H1884V361.500M1869.500 368V372H1873.500"/><circle cx="1884.500" cy="371" r="4.200"/><path d="M1887.500 374L1892 378.500" stroke-width="2.400"/><path d="M1878 387H1884L1881 390Z" fill="#474b53"/><path d="M1879 415.500V404H1876L1881 396L1886 404H1883V415.500Z"/><ellipse cx="1880" cy="409" rx="10.500" ry="4"/><path d="M1875 409L1871.500 412L1876 414.500"/><path d="M1878 425H1884L1881 428Z" fill="#474b53"/><rect x="1869.500" y="437.500" width="6" height="5.500"/><rect x="1877.500" y="437.500" width="6" height="5.500"/><rect x="1885.500" y="437.500" width="6" height="5.500"/><rect x="1869.500" y="446.500" width="16" height="12.500"/><path d="M1874.500 449L1881 453L1874.500 457Z" fill="#474b53"/><circle cx="1891" cy="473.500" r="3"/><path d="M1888.500 472.500H1893.500M1889.500 474H1892.500L1891 475.800Z"/></g>
</svg>
<div class="abs" style="left:0px;top:30px;width:1920px;height:1px;background:#b4b4b4;"></div>
<div class="abs" style="left:0px;top:31px;width:1920px;height:1px;background:#7a7a7a;"></div>
<div class="abs" style="left:0px;top:6px;width:434px;height:24px;background:linear-gradient(#a9a9a9,#858585 45%,#5c5c5c);box-sizing:border-box;border:1px solid #5a5a5a;border-left:0"></div>
<div class="abs" style="left:0px;top:7px;width:41px;height:22px;background:linear-gradient(#d0d0d0,#b4b4b4 50%,#9a9a9a);"></div>
<div class="abs" style="left:238px;top:8px;width:180px;height:21px;background:linear-gradient(#fbfbfb,#e2e2e2 55%,#c4c4c4);box-sizing:border-box;border:1px solid #6a6a6a;border-top-color:#555"></div>
<div class="abs" style="left:260px;top:11px;font-size:12px;line-height:16px;color:#000;white-space:nowrap">草图与注释</div>
<div class="abs" style="left:418px;top:7px;width:15px;height:22px;background:linear-gradient(#b2b2b2,#8a8a8a 50%,#585858);"></div>
<div class="abs" style="left:1312px;top:6px;width:445px;height:24px;background:linear-gradient(#a9a9a9,#858585 45%,#5c5c5c);box-sizing:border-box;border:1px solid #5a5a5a"></div>
<div class="abs" style="left:1326px;top:8px;width:179px;height:21px;background:#f5f5f5;box-sizing:border-box;border:1px solid #777"></div>
<div class="abs" style="left:1330px;top:12px;font-size:11.5px;line-height:14px;color:#555;font-style:italic;white-space:nowrap;letter-spacing:-0.6px">键入关键字或短语</div>
<div class="abs" style="left:1555px;top:11px;font-size:12px;line-height:15px;color:#fff;white-space:nowrap">登录</div>
<div class="abs" style="left:1714px;top:10px;width:1px;height:17px;background:#9a9a9a;"></div>
<div class="abs" style="left:756px;top:6px;font-size:13px;line-height:16px;color:#222;white-space:nowrap;font-family:'Liberation Sans',sans-serif"><span style="display:inline-block;width:167px">Autodesk AutoCAD 2014</span>guiji11.dwg</div>
<div class="abs" style="left:1901px;top:32px;width:19px;height:950px;background:#f0f0f0;box-sizing:border-box;border-left:1px solid #fff;border-right:1px solid #fff"></div>
<div class="abs" style="left:1902px;top:598px;width:15px;height:17px;background:#cdcdcd;"></div>
<div class="abs" style="left:0px;top:982px;width:1920px;height:15px;background:#f0f0f0;"></div>
<div class="abs" style="left:0px;top:997px;width:1920px;height:2px;background:#ffffff;"></div>
<div class="abs" style="left:0px;top:999px;width:1920px;height:5px;background:#717171;"></div>
<div class="abs" style="left:1662px;top:983px;width:17px;height:13px;background:#cdcdcd;"></div>
<div class="abs" style="left:1255px;top:983px;width:4px;height:13px;background:#bdbdbd;"></div>
<div class="abs" style="left:0px;top:1004px;width:1920px;height:29px;background:#c8c8c8;"></div>
<div class="abs" style="left:23px;top:1032px;width:1897px;height:1px;background:#8a8a8a;"></div>
<div class="abs" style="left:23px;top:1033px;width:1897px;height:22px;background:#ffffff;"></div>
<div class="abs" style="left:0px;top:1004px;width:1px;height:52px;background:#909090;"></div>
<div class="abs" style="left:1px;top:1004px;width:22px;height:51px;background:linear-gradient(#7c7c7c,#5e5e5e 35%,#3e3e3e);"></div>
<div class="abs" style="left:25px;top:1016px;font-size:12px;line-height:15px;color:#000;white-space:nowrap;letter-spacing:1.2px">命令:</div>
<div class="abs" style="left:60px;top:1037px;font-size:12.5px;line-height:15px;color:#999;font-style:italic;white-space:nowrap;letter-spacing:0.8px">键入命令</div>
<div class="abs" style="left:0px;top:1055px;width:1920px;height:1px;background:#8c8c8c;"></div>
<div class="abs" style="left:0px;top:1056px;width:1920px;height:1px;background:#000;"></div>
<div class="abs" style="left:0px;top:1057px;width:1920px;height:21px;background:linear-gradient(#9b9b9b,#848484);"></div>
<div class="abs" style="left:0px;top:1078px;width:1920px;height:2px;background:#000;"></div>
<div class="abs" style="left:12px;top:1062px;font-size:11px;line-height:15px;color:#a8a8a8;white-space:nowrap;font-family:'Liberation Mono',monospace;letter-spacing:-0.65px">2697.1988, 2148.0698, 0.0000</div>
<div class="abs" style="left:223px;top:1057px;width:1px;height:21px;background:#5e5e5e;"></div>
<div class="abs" style="left:224px;top:1057px;width:21px;height:21px;background:linear-gradient(#d2d2d2,#bcbcbc 50%,#adadad);"></div>
<div class="abs" style="left:245px;top:1057px;width:1px;height:21px;background:#5e5e5e;"></div>
<div class="abs" style="left:246px;top:1057px;width:21px;height:21px;background:linear-gradient(#d2d2d2,#bcbcbc 50%,#adadad);"></div>
<div class="abs" style="left:267px;top:1057px;width:1px;height:21px;background:#5e5e5e;"></div>
<div class="abs" style="left:268px;top:1057px;width:21px;height:21px;background:linear-gradient(#e6f3f7,#cfe9f1 48%,#a5d3e2 52%,#c6e6ef);"></div>
<div class="abs" style="left:289px;top:1057px;width:1px;height:21px;background:#5e5e5e;"></div>
<div class="abs" style="left:290px;top:1057px;width:21px;height:21px;background:linear-gradient(#d2d2d2,#bcbcbc 50%,#adadad);"></div>
<div class="abs" style="left:311px;top:1057px;width:1px;height:21px;background:#5e5e5e;"></div>
<div class="abs" style="left:312px;top:1057px;width:21px;height:21px;background:linear-gradient(#d2d2d2,#bcbcbc 50%,#adadad);"></div>
<div class="abs" style="left:333px;top:1057px;width:1px;height:21px;background:#5e5e5e;"></div>
<div class="abs" style="left:334px;top:1057px;width:21px;height:21px;background:linear-gradient(#e6f3f7,#cfe9f1 48%,#a5d3e2 52%,#c6e6ef);"></div>
<div class="abs" style="left:355px;top:1057px;width:1px;height:21px;background:#5e5e5e;"></div>
<div class="abs" style="left:356px;top:1057px;width:21px;height:21px;background:linear-gradient(#d2d2d2,#bcbcbc 50%,#adadad);"></div>
<div class="abs" style="left:377px;top:1057px;width:1px;height:21px;background:#5e5e5e;"></div>
<div class="abs" style="left:378px;top:1057px;width:21px;height:21px;background:linear-gradient(#d2d2d2,#bcbcbc 50%,#adadad);"></div>
<div class="abs" style="left:399px;top:1057px;width:1px;height:21px;background:#5e5e5e;"></div>
<div class="abs" style="left:400px;top:1057px;width:21px;height:21px;background:linear-gradient(#e6f3f7,#cfe9f1 48%,#a5d3e2 52%,#c6e6ef);"></div>
<div class="abs" style="left:421px;top:1057px;width:1px;height:21px;background:#5e5e5e;"></div>
<div class="abs" style="left:422px;top:1057px;width:21px;height:21px;background:linear-gradient(#e6f3f7,#cfe9f1 48%,#a5d3e2 52%,#c6e6ef);"></div>
<div class="abs" style="left:443px;top:1057px;width:1px;height:21px;background:#5e5e5e;"></div>
<div class="abs" style="left:444px;top:1057px;width:21px;height:21px;background:linear-gradient(#d2d2d2,#bcbcbc 50%,#adadad);"></div>
<div class="abs" style="left:465px;top:1057px;width:1px;height:21px;background:#5e5e5e;"></div>
<div class="abs" style="left:466px;top:1057px;width:21px;height:21px;background:linear-gradient(#d2d2d2,#bcbcbc 50%,#adadad);"></div>
<div class="abs" style="left:487px;top:1057px;width:1px;height:21px;background:#5e5e5e;"></div>
<div class="abs" style="left:488px;top:1057px;width:21px;height:21px;background:linear-gradient(#d2d2d2,#bcbcbc 50%,#adadad);"></div>
<div class="abs" style="left:509px;top:1057px;width:1px;height:21px;background:#5e5e5e;"></div>
<div class="abs" style="left:510px;top:1057px;width:21px;height:21px;background:linear-gradient(#d2d2d2,#bcbcbc 50%,#adadad);"></div>
<div class="abs" style="left:531px;top:1057px;width:1px;height:21px;background:#5e5e5e;"></div>
<div class="abs" style="left:532px;top:1057px;width:21px;height:21px;background:linear-gradient(#d2d2d2,#bcbcbc 50%,#adadad);"></div>
<div class="abs" style="left:553px;top:1057px;width:1px;height:21px;background:#5e5e5e;"></div>
<div class="abs" style="left:1552px;top:1057px;width:1px;height:21px;background:#5e5e5e;"></div><div class="abs" style="left:1553px;top:1057px;width:29px;height:21px;background:linear-gradient(#d2d2d2,#bcbcbc 50%,#adadad);"></div><div class="abs" style="left:1582px;top:1057px;width:1px;height:21px;background:#5e5e5e;"></div>
<div class="abs" style="left:1582px;top:1057px;width:1px;height:21px;background:#5e5e5e;"></div><div class="abs" style="left:1583px;top:1057px;width:21px;height:21px;background:linear-gradient(#d2d2d2,#bcbcbc 50%,#adadad);"></div><div class="abs" style="left:1604px;top:1057px;width:1px;height:21px;background:#5e5e5e;"></div>
<div class="abs" style="left:1604px;top:1057px;width:1px;height:21px;background:#5e5e5e;"></div><div class="abs" style="left:1605px;top:1057px;width:21px;height:21px;background:linear-gradient(#d2d2d2,#bcbcbc 50%,#adadad);"></div><div class="abs" style="left:1626px;top:1057px;width:1px;height:21px;background:#5e5e5e;"></div>
<div class="abs" style="left:1644px;top:1057px;width:1px;height:21px;background:#5e5e5e;"></div><div class="abs" style="left:1645px;top:1057px;width:53px;height:21px;background:linear-gradient(#d2d2d2,#bcbcbc 50%,#adadad);"></div><div class="abs" style="left:1698px;top:1057px;width:1px;height:21px;background:#5e5e5e;"></div>
<div class="abs" style="left:1698px;top:1057px;width:1px;height:21px;background:#5e5e5e;"></div><div class="abs" style="left:1699px;top:1057px;width:21px;height:21px;background:linear-gradient(#d2d2d2,#bcbcbc 50%,#adadad);"></div><div class="abs" style="left:1720px;top:1057px;width:1px;height:21px;background:#5e5e5e;"></div>
<div class="abs" style="left:1720px;top:1057px;width:1px;height:21px;background:#5e5e5e;"></div><div class="abs" style="left:1721px;top:1057px;width:21px;height:21px;background:linear-gradient(#d2d2d2,#bcbcbc 50%,#adadad);"></div><div class="abs" style="left:1742px;top:1057px;width:1px;height:21px;background:#5e5e5e;"></div>
<div class="abs" style="left:1748px;top:1057px;width:1px;height:21px;background:#5e5e5e;"></div><div class="abs" style="left:1749px;top:1057px;width:21px;height:21px;background:linear-gradient(#d2d2d2,#bcbcbc 50%,#adadad);"></div><div class="abs" style="left:1770px;top:1057px;width:1px;height:21px;background:#5e5e5e;"></div>
<div class="abs" style="left:1770px;top:1057px;width:1px;height:21px;background:#5e5e5e;"></div><div class="abs" style="left:1771px;top:1057px;width:21px;height:21px;background:linear-gradient(#d2d2d2,#bcbcbc 50%,#adadad);"></div><div class="abs" style="left:1792px;top:1057px;width:1px;height:21px;background:#5e5e5e;"></div>
<div class="abs" style="left:1792px;top:1057px;width:1px;height:21px;background:#5e5e5e;"></div><div class="abs" style="left:1793px;top:1057px;width:21px;height:21px;background:linear-gradient(#d2d2d2,#bcbcbc 50%,#adadad);"></div><div class="abs" style="left:1814px;top:1057px;width:1px;height:21px;background:#5e5e5e;"></div>
<div class="abs" style="left:1870px;top:1057px;width:1px;height:21px;background:#5e5e5e;"></div><div class="abs" style="left:1871px;top:1057px;width:10px;height:21px;background:linear-gradient(#d2d2d2,#bcbcbc 50%,#adadad);"></div><div class="abs" style="left:1881px;top:1057px;width:1px;height:21px;background:#5e5e5e;"></div>
<div class="abs" style="left:1881px;top:1057px;width:1px;height:21px;background:#5e5e5e;"></div><div class="abs" style="left:1882px;top:1057px;width:21px;height:21px;background:linear-gradient(#d2d2d2,#bcbcbc 50%,#adadad);"></div><div class="abs" style="left:1903px;top:1057px;width:1px;height:21px;background:#5e5e5e;"></div>
<div class="abs" style="left:1815px;top:1057px;width:55px;height:21px;background:linear-gradient(#7c7c7c,#6a6a6a);"></div>
<div class="abs" style="left:1820px;top:1059px;width:44px;height:17px;background:linear-gradient(#9a9a9a,#8a8a8a);"></div>
<div class="abs" style="left:1555px;top:1062px;font-size:12px;line-height:15px;color:#000;white-space:nowrap">模型</div>
<div class="abs" style="left:1665px;top:1061px;font-size:13px;line-height:15px;color:#000;white-space:nowrap;font-family:'Liberation Serif',serif;letter-spacing:1px">1:1</div>
<svg class="abs" style="left:0;top:0;pointer-events:none" width="1920" height="1080" viewBox="0 0 1920 1080">
<defs>
<linearGradient id="gRed" x1="0" y1="0" x2="0" y2="1"><stop offset="0" stop-color="#f04428"/><stop offset="0.55" stop-color="#c81c10"/><stop offset="1" stop-color="#8c0a06"/></linearGradient>
<linearGradient id="gPaper" x1="0" y1="0" x2="0" y2="1"><stop offset="0" stop-color="#ffffff"/><stop offset="1" stop-color="#cfd4de"/></linearGradient>
<linearGradient id="gBtnW" x1="0" y1="0" x2="0" y2="1"><stop offset="0" stop-color="#ffffff"/><stop offset="1" stop-color="#d0d0d8"/></linearGradient>
</defs>
<path d="M11.6 8.8L20.3 24.3L17.2 28L14.8 24.6H8.4L6 28L2.9 24.3Z" fill="url(#gRed)"/>
<path d="M11.6 8.8L14.5 19.5L6.5 22L2.9 24.3Z" fill="#e8391f" fill-opacity="0.55"/>
<path d="M2.9 24.3L6 28L8.4 24.6L7 22.5ZM20.3 24.3L17.2 28L14.8 24.6L16.5 22Z" fill="#7a0805" fill-opacity="0.6"/>
<path d="M29.8 14H37.2L33.5 18.3Z" fill="#333b48"/>
<path d="M51 12.500H61.500L65.500 16.500V24H51Z" fill="url(#gPaper)" stroke="#2f3846" stroke-width="1.2" stroke-linejoin="round"/><path d="M61.500 12.500V16.500H65.500" fill="#eef0f4" stroke="#2f3846" stroke-width="1"/>
<path d="M75 22V13H80L81.500 14.500H86.500V17" fill="#e4e8ee" stroke="#2f3846" stroke-width="1.2" stroke-linejoin="round"/><path d="M75 22L79 16.800H89.500L85.500 22Z" fill="#cdd3dc" stroke="#2f3846" stroke-width="1.2" stroke-linejoin="round"/>
<rect x="99.6" y="10.6" width="13" height="13" rx="1.2" fill="#5c6c84" stroke="#2f3846" stroke-width="1.2"/><rect x="101.6" y="11.2" width="9" height="5.5" fill="#f2f3f6"/><rect x="102.1" y="18.7" width="7.5" height="4.3" fill="#f2f3f6"/><rect x="103.1" y="19.7" width="1.6" height="2.9" fill="#2f3846"/>
<rect x="122.6" y="11.6" width="12" height="12" rx="1.2" fill="#5c6c84" stroke="#2f3846" stroke-width="1.2"/><rect x="124.6" y="12.2" width="8" height="5.0" fill="#f2f3f6"/><rect x="125.1" y="19.0" width="6.5" height="4.0" fill="#f2f3f6"/><rect x="126.1" y="20.0" width="1.6" height="2.6" fill="#2f3846"/>
<path d="M136.800 18.200L138.300 19.700L132 26L130 26.500L130.500 24.500Z" fill="#f6b21a" stroke="#8a4a10" stroke-width="0.8"/><path d="M130 26.500L130.500 24.500L132 26Z" fill="#fff"/>
<path d="M149.500 15V10.600H158.500V15" fill="#fff" stroke="#2f3846" stroke-width="1.2"/><rect x="146.600" y="14.600" width="14.800" height="7.800" rx="2" fill="url(#gBtnW)" stroke="#2f3846" stroke-width="1.2"/><rect x="149.500" y="19.600" width="9" height="4.900" fill="#cfe3f0" stroke="#2f3846" stroke-width="1.1"/>
<path d="M170.500 16L176.700 10.600V14.200C182 14.200 185 17 184.500 22.800H182C181.800 19.500 180 18.600 176.700 18.600V21.800Z" fill="#f4f5f8" stroke="#2f3846" stroke-width="1.1" stroke-linejoin="round"/>
<path d="M221.300 16L215.100 10.600V14.200C209.800 14.200 206.800 17 207.300 22.800H209.800C210 19.500 211.800 18.600 215.100 18.600V21.800Z" fill="#c6c6c8" stroke="#8a8a8c" stroke-width="1" stroke-linejoin="round"/>
<path d="M193 16H198.200L195.600 19.200ZM229 16H234.200L231.600 19.200Z" fill="#4c4c4c"/>
<path d="M257.9 16.6L257.9 19.4L256.0 19.4L255.3 21.2L256.5 22.6L254.6 24.5L253.2 23.3L251.4 24.0L251.4 25.9L248.6 25.9L248.6 24.0L246.8 23.3L245.4 24.5L243.5 22.6L244.7 21.2L244.0 19.4L242.1 19.4L242.1 16.6L244.0 16.6L244.7 14.8L243.5 13.4L245.4 11.5L246.8 12.7L248.6 12.0L248.6 10.1L251.4 10.1L251.4 12.0L253.2 12.7L254.6 11.5L256.5 13.4L255.3 14.8L256.0 16.6Z" fill="#fafafa" stroke="#4a5260" stroke-width="1.1" stroke-linejoin="round"/><circle cx="250" cy="18" r="2.8" fill="none" stroke="#4a5260" stroke-width="1.1"/>
<path d="M408.300 15.800H415.800L412 20Z" fill="#505050"/>
<rect x="421.800" y="13.800" width="7.400" height="1.500" fill="#000"/><path d="M421.600 16.300H429.400L425.500 20.300Z" fill="#000"/>
<path d="M1316.500 14L1321.300 17.500L1316.500 21Z" fill="#000"/>
<g stroke="#2f3846" stroke-width="1"><path d="M1511 25.500V19L1513 13.500L1514 11.500H1516.500L1517.500 13.500V25.500Z" fill="#eef0f3"/><path d="M1519.500 25.500V13.500L1520.500 11.500H1523L1524 13.500L1526 19V25.500Z" fill="#eef0f3"/><rect x="1517.500" y="15" width="2" height="4.500" fill="#9aa0aa"/></g><path d="M1511 20.500H1517.500M1519.500 20.500H1526" stroke="#6a7280" stroke-width="1"/>
<path d="M1541.700 10.500C1544.500 10.500 1545.600 12.800 1545.400 15.500C1545.200 17.800 1544.300 19 1543.800 19.800C1544.500 21.500 1548.500 22 1549.500 25H1534C1535 22 1539 21.500 1539.700 19.800C1539.100 19 1538.200 17.800 1538 15.500C1537.800 12.800 1538.900 10.500 1541.700 10.500Z" fill="#f4f5f8" stroke="#2f3846" stroke-width="1.1"/>
<path d="M1655.500 12.500H1660L1662.300 16L1664.600 12.500H1669L1664.800 18.200L1669 24H1664.600L1662.300 20.500L1660 24H1655.500L1659.800 18.200Z" fill="#eef2fb" stroke="#1f3fa0" stroke-width="1.2" stroke-linejoin="round"/>
<path d="M1686 12.500L1692.500 22.500H1679.500Z" fill="none" stroke="#1f3fa0" stroke-width="3.400" stroke-linejoin="round"/><path d="M1686 12.500L1692.500 22.500H1679.500Z" fill="none" stroke="#f0f3fb" stroke-width="1.600" stroke-linejoin="round"/><g fill="#f0f3fb" stroke="#1f3fa0" stroke-width="0.9"><circle cx="1686" cy="12.300" r="2.100"/><circle cx="1680" cy="22.300" r="2.100"/><circle cx="1692" cy="22.300" r="2.100"/></g>
<circle cx="1732" cy="17.500" r="7.300" fill="#fafbfd" stroke="#222a38" stroke-width="1.200"/><text x="1732" y="22" font-family="Liberation Sans,sans-serif" font-weight="bold" font-size="12.500" fill="#1c36b0" text-anchor="middle">?</text>
<path d="M1640 16.500H1645.200L1642.600 19.500ZM1699 16.500H1704.200L1701.600 19.500ZM1747 16.500H1752.200L1749.600 19.500Z" fill="#4c4c4c"/>
<path d="M1806 11.500H1816M1851.500 6.500H1861.500V16.500H1851.500ZM1897 6L1907 16M1907 6L1897 16" stroke="#8a8a8a" stroke-width="1" fill="none"/>
<path d="M1906.500 43L1910 39.500L1913.500 43" stroke="#606060" stroke-width="1.800" fill="none"/><path d="M1906 972L1909.500 975.500L1913 972" stroke="#606060" stroke-width="1.800" fill="none"/>
<path d="M1271.500 986L1268 989.500L1271.500 993M1889.500 986L1893 989.500L1889.500 993" stroke="#606060" stroke-width="1.800" fill="none"/>
<path d="M58 982H104.500L99.500 995.500H63Z" fill="#212830"/>
<g stroke="#b8b8b8" fill="none" stroke-width="1"><path d="M2.500 983.500H15.500V996.500H2.500ZM15.500 983.500H29.500V996.500H15.500M29.500 983.500H43.500V996.500H29.500M43.500 983.500H57.500V996.500H43.500"/></g>
<g fill="#808080"><path d="M5.500 985H7V995H5.500ZM13 985V995L7.500 990ZM26 985V995L19.500 990ZM33 985V995L39.500 990ZM47 985V995L52.500 990ZM53 985H54.500V995H53Z"/></g>
<path d="M107 982.500L101.500 996.500M150.500 982.500L145 996.500M196 982.500L190.500 996.500" stroke="#6a6a6a" stroke-width="1.1" fill="none"/>
<g font-family='"Liberation Sans","Noto Sans CJK SC",sans-serif' font-size="12"><text x="68.500" y="994.500" fill="#fff" textLength="24" lengthAdjust="spacingAndGlyphs">模型</text><text x="109" y="994.500" fill="#000" textLength="28.500" lengthAdjust="spacingAndGlyphs">布局1</text><text x="155" y="994.500" fill="#000" textLength="29" lengthAdjust="spacingAndGlyphs">布局2</text></g>
<g fill="#b6b6b6"><rect x="3.0" y="1008" width="1.900" height="1.900"/><rect x="3.0" y="1011" width="1.900" height="1.900"/><rect x="6.0" y="1008" width="1.900" height="1.900"/><rect x="6.0" y="1011" width="1.900" height="1.900"/><rect x="9.0" y="1008" width="1.900" height="1.900"/><rect x="9.0" y="1011" width="1.900" height="1.900"/><rect x="12.0" y="1008" width="1.900" height="1.900"/><rect x="12.0" y="1011" width="1.900" height="1.900"/><rect x="15.0" y="1008" width="1.900" height="1.900"/><rect x="15.0" y="1011" width="1.900" height="1.900"/><rect x="18.0" y="1008" width="1.900" height="1.900"/><rect x="18.0" y="1011" width="1.900" height="1.900"/></g>
<path d="M6.800 1021.500L15 1028.800M15 1021.500L6.800 1028.800" stroke="#fff" stroke-width="2.500" fill="none"/>
<g fill="none"><path d="M10.800 1046L16.600 1052.500" stroke="#333" stroke-width="4.600" stroke-linecap="round"/><path d="M11.30 1043.60A2.9 2.9 0 1 1 8.40 1040.70" stroke="#333" stroke-width="3.600"/><path d="M10.800 1046L16.600 1052.500" stroke="#fff" stroke-width="2.800" stroke-linecap="round"/><path d="M11.30 1043.60A2.9 2.9 0 1 1 8.40 1040.70" stroke="#fff" stroke-width="2.100"/></g>
<rect x="28.500" y="1037.500" width="13.500" height="13" rx="1.500" fill="#e6e7ee" stroke="#8c8e98" stroke-width="1"/><path d="M31 1040.500L35 1043.500L31 1046.500M35.500 1047.500H39.500" stroke="#2a2e38" stroke-width="1.200" fill="none"/><path d="M45.500 1043.500H51L48.200 1046.500Z" fill="#777"/>
<path d="M232.500 1059V1073M226 1065.500H239M230.500 1063.500H234.500V1067.500H230.500Z" stroke="#2e3340" stroke-width="1.300" fill="none"/><path d="M238.600 1067.300V1074.800" stroke="#d0480c" stroke-width="1.200"/><rect x="239.200" y="1067.300" width="3.300" height="3.300" fill="#fff" stroke="#1c6ad0" stroke-width="1.200"/><rect x="235.300" y="1071.300" width="3" height="3" fill="#fff" stroke="#55607a" stroke-width="1"/><g fill="#111"><rect x="251.3" y="1061.8" width="1.200" height="1.200"/><rect x="251.3" y="1064.9" width="1.200" height="1.200"/><rect x="251.3" y="1068" width="1.200" height="1.200"/><rect x="254.4" y="1061.8" width="1.200" height="1.200"/><rect x="254.4" y="1064.9" width="1.200" height="1.200"/><rect x="254.4" y="1068" width="1.200" height="1.200"/><rect x="257.5" y="1061.8" width="1.200" height="1.200"/><rect x="257.5" y="1064.9" width="1.200" height="1.200"/><rect x="257.5" y="1068" width="1.200" height="1.200"/><rect x="260" y="1061.800" width="1.300" height="1.300"/><rect x="260" y="1064.300" width="1.300" height="5.500"/><rect x="251.200" y="1071" width="1.300" height="1.300"/><rect x="253.800" y="1071" width="5" height="1.300"/><rect x="260" y="1071" width="1.300" height="1.300"/></g><rect x="270.600" y="1059.300" width="15.300" height="15.600" rx="1.500" fill="#3a3f4a"/><rect x="271.90" y="1060.60" width="1.700" height="1.700" fill="#fff"/><rect x="271.90" y="1063.50" width="1.700" height="1.700" fill="#fff"/><rect x="271.90" y="1066.40" width="1.700" height="1.700" fill="#fff"/><rect x="271.90" y="1069.30" width="1.700" height="1.700" fill="#fff"/><rect x="271.90" y="1072.20" width="1.700" height="1.700" fill="#fff"/><rect x="274.75" y="1060.60" width="1.700" height="1.700" fill="#fff"/><rect x="274.75" y="1063.50" width="1.700" height="1.700" fill="#fff"/><rect x="274.75" y="1066.40" width="1.700" height="1.700" fill="#fff"/><rect x="274.75" y="1069.30" width="1.700" height="1.700" fill="#fff"/><rect x="274.75" y="1072.20" width="1.700" height="1.700" fill="#fff"/><rect x="277.60" y="1060.60" width="1.700" height="1.700" fill="#fff"/><rect x="277.60" y="1063.50" width="1.700" height="1.700" fill="#fff"/><rect x="277.60" y="1066.40" width="1.700" height="1.700" fill="#fff"/><rect x="277.60" y="1069.30" width="1.700" height="1.700" fill="#fff"/><rect x="277.60" y="1072.20" width="1.700" height="1.700" fill="#fff"/><rect x="280.45" y="1060.60" width="1.700" height="1.700" fill="#fff"/><rect x="280.45" y="1063.50" width="1.700" height="1.700" fill="#fff"/><rect x="280.45" y="1066.40" width="1.700" height="1.700" fill="#fff"/><rect x="280.45" y="1069.30" width="1.700" height="1.700" fill="#fff"/><rect x="280.45" y="1072.20" width="1.700" height="1.700" fill="#fff"/><rect x="283.30" y="1060.60" width="1.700" height="1.700" fill="#fff"/><rect x="283.30" y="1063.50" width="1.700" height="1.700" fill="#fff"/><rect x="283.30" y="1066.40" width="1.700" height="1.700" fill="#fff"/><rect x="283.30" y="1069.30" width="1.700" height="1.700" fill="#fff"/><rect x="283.30" y="1072.20" width="1.700" height="1.700" fill="#fff"/><path d="M292.700 1059.300V1074.600H307.700" stroke="#2e3340" stroke-width="1.300" fill="none"/><path d="M292.700 1068.500H299V1074.600" stroke="#5a6478" stroke-width="1.100" fill="none"/><circle cx="320.400" cy="1068" r="3.800" fill="none" stroke="#50545c" stroke-width="1.200"/><path d="M320.900 1068.400L326.500 1062.300M319.500 1068.500H328" stroke="#000" stroke-width="1.300" fill="none"/><path d="M324 1065.200Q325.500 1066.500 325.500 1068.400" stroke="#000" stroke-width="1" fill="none"/><rect x="338.500" y="1061.500" width="13" height="12.600" fill="url(#gPaper)" stroke="#2e3340" stroke-width="1.200"/><circle cx="338" cy="1061" r="1.700" fill="#fff" stroke="#e0500c" stroke-width="1.200"/><path d="M360.500 1072V1063L364 1059.600H373.500V1069L370 1072.500Z" fill="#eceef2" stroke="#2e3340" stroke-width="1.100" stroke-linejoin="round"/><path d="M364 1063H370V1072.500" fill="none" stroke="#9aa0ac" stroke-width="0.900"/><path d="M362.800 1063.200H370.300V1072H362.800Z" fill="url(#gPaper)"/><circle cx="360.300" cy="1072.400" r="2" fill="#fff" stroke="#e0500c" stroke-width="1.400"/><path d="M392.500 1062.500L383.800 1071M383 1071.500H393M387 1067.800L389.500 1065.400" stroke="#111" stroke-width="1.200" fill="none"/><path d="M403.700 1060V1073H417M402 1061.800L403.700 1059.300L405.400 1061.800M415.300 1071.300L417.800 1073L415.300 1074.700" stroke="#2e3340" stroke-width="1.200" fill="none"/><path d="M404.500 1072.200L411 1065.300" stroke="#2e3340" stroke-width="1" stroke-dasharray="2 1.200" fill="none"/><path d="M414.500 1059L411.200 1063.200H413.800L412.200 1067.300L417.600 1062.200H414.800L416.800 1059Z" fill="#f9b21c" stroke="#e2720c" stroke-width="0.700"/><path d="M430.300 1062.400V1070.800M426.300 1066.400H438.300" stroke="#000" stroke-width="1.400" fill="none"/><rect x="432.600" y="1068.300" width="5.400" height="2.400" fill="#fff" stroke="#000" stroke-width="1.100"/><path d="M454 1061V1073M454 1067.100H459.800" stroke="#000" stroke-width="1" fill="none"/><path d="M448 1067.100H454.500" stroke="#000" stroke-width="2.600" fill="none"/><rect x="466" y="1057" width="21" height="21" fill="#d3e9f2"/><rect x="469.30" y="1060.70" width="2.200" height="2.150" fill="#7fb3e6"/><rect x="469.30" y="1062.85" width="2.200" height="2.150" fill="#cfe3f6"/><rect x="469.30" y="1065.00" width="2.200" height="2.150" fill="#7fb3e6"/><rect x="469.30" y="1067.15" width="2.200" height="2.150" fill="#cfe3f6"/><rect x="469.30" y="1069.30" width="2.200" height="2.150" fill="#7fb3e6"/><rect x="469.30" y="1071.45" width="2.200" height="2.150" fill="#cfe3f6"/><rect x="471.50" y="1060.70" width="2.200" height="2.150" fill="#cfe3f6"/><rect x="471.50" y="1062.85" width="2.200" height="2.150" fill="#7fb3e6"/><rect x="471.50" y="1065.00" width="2.200" height="2.150" fill="#cfe3f6"/><rect x="471.50" y="1067.15" width="2.200" height="2.150" fill="#7fb3e6"/><rect x="471.50" y="1069.30" width="2.200" height="2.150" fill="#cfe3f6"/><rect x="471.50" y="1071.45" width="2.200" height="2.150" fill="#7fb3e6"/><rect x="473.70" y="1060.70" width="2.200" height="2.150" fill="#7fb3e6"/><rect x="473.70" y="1062.85" width="2.200" height="2.150" fill="#cfe3f6"/><rect x="473.70" y="1065.00" width="2.200" height="2.150" fill="#7fb3e6"/><rect x="473.70" y="1067.15" width="2.200" height="2.150" fill="#cfe3f6"/><rect x="473.70" y="1069.30" width="2.200" height="2.150" fill="#7fb3e6"/><rect x="473.70" y="1071.45" width="2.200" height="2.150" fill="#cfe3f6"/><rect x="475.90" y="1060.70" width="2.200" height="2.150" fill="#cfe3f6"/><rect x="475.90" y="1062.85" width="2.200" height="2.150" fill="#7fb3e6"/><rect x="475.90" y="1065.00" width="2.200" height="2.150" fill="#cfe3f6"/><rect x="475.90" y="1067.15" width="2.200" height="2.150" fill="#7fb3e6"/><rect x="475.90" y="1069.30" width="2.200" height="2.150" fill="#cfe3f6"/><rect x="475.90" y="1071.45" width="2.200" height="2.150" fill="#7fb3e6"/><rect x="478.10" y="1060.70" width="2.200" height="2.150" fill="#7fb3e6"/><rect x="478.10" y="1062.85" width="2.200" height="2.150" fill="#cfe3f6"/><rect x="478.10" y="1065.00" width="2.200" height="2.150" fill="#7fb3e6"/><rect x="478.10" y="1067.15" width="2.200" height="2.150" fill="#cfe3f6"/><rect x="478.10" y="1069.30" width="2.200" height="2.150" fill="#7fb3e6"/><rect x="478.10" y="1071.45" width="2.200" height="2.150" fill="#cfe3f6"/><rect x="480.30" y="1060.70" width="2.200" height="2.150" fill="#cfe3f6"/><rect x="480.30" y="1062.85" width="2.200" height="2.150" fill="#7fb3e6"/><rect x="480.30" y="1065.00" width="2.200" height="2.150" fill="#cfe3f6"/><rect x="480.30" y="1067.15" width="2.200" height="2.150" fill="#7fb3e6"/><rect x="480.30" y="1069.30" width="2.200" height="2.150" fill="#cfe3f6"/><rect x="480.30" y="1071.45" width="2.200" height="2.150" fill="#7fb3e6"/><rect x="468.600" y="1060" width="14.600" height="14.200" rx="1.200" fill="none" stroke="#1c66c4" stroke-width="1.200"/><rect x="494" y="1062" width="8" height="9.800" fill="#111"/><g fill="#fff"><rect x="495.200" y="1064.500" width="1.600" height="1.500"/><rect x="497.600" y="1064.500" width="3.200" height="1.500"/><rect x="495.200" y="1066.800" width="1.600" height="1.500"/><rect x="497.600" y="1066.800" width="3.200" height="1.500"/><rect x="495.200" y="1069.100" width="1.600" height="1.500"/><rect x="497.600" y="1069.100" width="3.200" height="1.500"/></g><path d="M515.500 1059.300V1065.800M512.200 1062.500H518.900" stroke="#3a4660" stroke-width="1.100" fill="none"/><rect x="517.500" y="1063.800" width="7.500" height="7.500" rx="1" fill="#fff" stroke="#3a4660" stroke-width="1"/><rect x="520.500" y="1067.500" width="7" height="7" rx="0.800" fill="#84b85c" stroke="#1e7410" stroke-width="1.300"/><path d="M539.200 1059.600H545.200V1064.500H549.800V1070H545.200V1074.600H539.200V1070H534.500V1064.500H539.200Z" fill="url(#gPaper)" stroke="#2e3340" stroke-width="1.300" stroke-linejoin="round"/><rect x="1587.500" y="1060.500" width="11.500" height="11" fill="#fff" stroke="#2e3340" stroke-width="1.100"/><path d="M1590 1069.500V1063.500L1595.500 1069.500Z" fill="none" stroke="#2e3340" stroke-width="1"/><rect x="1585.300" y="1073.300" width="15.700" height="1.300" rx="0.600" fill="#50545c"/><rect x="1608.300" y="1060.400" width="6.200" height="7.600" fill="#d8dade" stroke="#6a6e78" stroke-width="0.900"/><rect x="1616" y="1060.400" width="6.200" height="7.600" fill="#d8dade" stroke="#6a6e78" stroke-width="0.900"/><rect x="1608.800" y="1060.900" width="5.200" height="4.800" fill="#fff"/><rect x="1616.500" y="1060.900" width="5.200" height="4.800" fill="#fff"/><rect x="1607.700" y="1071.300" width="15.200" height="2.200" rx="1.100" fill="#50545c"/><path d="M1654.8 1059.9L1656.1 1065.9L1661.8 1072.4L1660.8 1073.9L1656.3999999999999 1071.1000000000001L1654.8 1074.4L1653.2 1071.1000000000001L1648.8 1073.9L1647.8 1072.4L1653.5 1065.9Z" fill="#fff" stroke="#2e3340" stroke-width="0.900" stroke-linejoin="round"/><path d="M1686.400 1064H1693.200L1689.800 1067.800Z" fill="#000"/><path d="M1708 1059.9L1709.3 1065.9L1715 1072.4L1714 1073.9L1709.6 1071.1000000000001L1708 1074.4L1706.4 1071.1000000000001L1702 1073.9L1701 1072.4L1706.7 1065.9Z" fill="#fff" stroke="#2e3340" stroke-width="0.900" stroke-linejoin="round"/><circle cx="1714.300" cy="1067.800" r="2.700" fill="#ffe9a0" stroke="#f59a14" stroke-width="1.300"/><rect x="1713.400" y="1071" width="1.800" height="3.200" fill="#5a6070"/><path d="M1731 1059.9L1732.3 1065.9L1738 1072.4L1737 1073.9L1732.6 1071.1000000000001L1731 1074.4L1729.4 1071.1000000000001L1725 1073.9L1724 1072.4L1729.7 1065.9Z" fill="#c4c4c4" stroke="#9a9a9a" stroke-width="0.900" stroke-linejoin="round"/><path d="M1727 1060L1724.500 1064H1727L1725.500 1067.500" stroke="#9a9a9a" stroke-width="1" fill="none"/><path d="M1766.5 1065.2L1766.5 1067.8L1764.6 1067.9L1763.9 1069.5L1765.2 1070.9L1763.4 1072.7L1762.0 1071.4L1760.4 1072.1L1760.3 1074.0L1757.7 1074.0L1757.6 1072.1L1756.0 1071.4L1754.6 1072.7L1752.8 1070.9L1754.1 1069.5L1753.4 1067.9L1751.5 1067.8L1751.5 1065.2L1753.4 1065.1L1754.1 1063.5L1752.8 1062.1L1754.6 1060.3L1756.0 1061.6L1757.6 1060.9L1757.7 1059.0L1760.3 1059.0L1760.4 1060.9L1762.0 1061.6L1763.4 1060.3L1765.2 1062.1L1763.9 1063.5L1764.6 1065.1Z" fill="#fdfdfd" stroke="#2e3340" stroke-width="1.2" stroke-linejoin="round"/><circle cx="1759" cy="1066.5" r="2.7" fill="none" stroke="#2e3340" stroke-width="1.2"/><path d="M1766.800 1070.500V1075H1762.300Z" fill="#000"/><path d="M1780.500 1067V1063.500A3.600 3.600 0 0 1 1787.700 1063.500V1066.500" fill="none" stroke="#2e3340" stroke-width="3"/><path d="M1780.500 1067V1063.500A3.600 3.600 0 0 1 1787.700 1063.500V1066.500" fill="none" stroke="#fff" stroke-width="1.200"/><rect x="1774" y="1067.200" width="9.600" height="7.200" fill="#fff" stroke="#2e3340" stroke-width="1.200"/><rect x="1778.200" y="1068.800" width="1.300" height="4" fill="#2e3340"/><circle cx="1802.400" cy="1066.800" r="6.400" fill="#8b9098"/><path d="M1796 1066.800A6.400 6.400 0 0 0 1808.800 1066.800Z" fill="#6e737c"/><path d="M1797.800 1063.600L1803.400 1069.800" stroke="#fff" stroke-width="1.500" stroke-linecap="round"/><path d="M1799.500 1062L1800 1063M1802.400 1061.200V1062.300M1805.300 1062L1804.800 1063" stroke="#fff" stroke-width="0.900"/><path d="M1825.500 1060H1832.500L1836 1063.500V1073.500H1825.500Z" fill="#3a78c0" stroke="#2a4a80" stroke-width="0.800"/><path d="M1825.500 1068L1830 1067L1836 1070V1073.500H1825.500Z" fill="#f6d428"/><path d="M1832.500 1060V1063.500H1836Z" fill="#e8eef8"/><circle cx="1827.600" cy="1063" r="1.500" fill="#fff" stroke="#2a4a80" stroke-width="0.700"/><path d="M1829 1063H1832" stroke="#fff" stroke-width="0.800"/><path d="M1831 1071.500L1833.500 1074L1839 1068.500" stroke="#1e9a1a" stroke-width="2.200" fill="none"/><path d="M1851.800 1060.200C1855.500 1060.200 1857 1063 1856.300 1065.800C1855.800 1067.800 1854 1069 1853.600 1071H1850C1849.600 1069 1847.800 1067.800 1847.300 1065.800C1846.600 1063 1848.100 1060.200 1851.800 1060.200Z" fill="#ffe9a6" stroke="#d8a848" stroke-width="0.800"/><rect x="1850.300" y="1071.200" width="3" height="3.300" fill="#f4f4f4" stroke="#8a8a8a" stroke-width="0.600"/><path d="M1874 1067.200H1879.200L1876.600 1071Z" fill="#000"/><rect x="1885.600" y="1060.500" width="13" height="12.400" fill="url(#gPaper)" stroke="#2e3340" stroke-width="1.100"/><path d="M1885.600 1063.500H1898.600" stroke="#2e3340" stroke-width="1"/><g fill="#2e3340"><rect x="1892.800" y="1061.500" width="1" height="1"/><rect x="1894.600" y="1061.500" width="1" height="1"/><rect x="1896.400" y="1061.500" width="1" height="1"/></g><g fill="#dcdccc"><rect x="1917.3" y="1074.6" width="1.900" height="1.900"/><rect x="1913.7" y="1074.6" width="1.900" height="1.900"/><rect x="1910.1" y="1074.6" width="1.900" height="1.900"/><rect x="1917.3" y="1071.0" width="1.900" height="1.900"/><rect x="1913.7" y="1071.0" width="1.900" height="1.900"/><rect x="1917.3" y="1067.4" width="1.900" height="1.900"/></g>
</svg>
</body></html>
